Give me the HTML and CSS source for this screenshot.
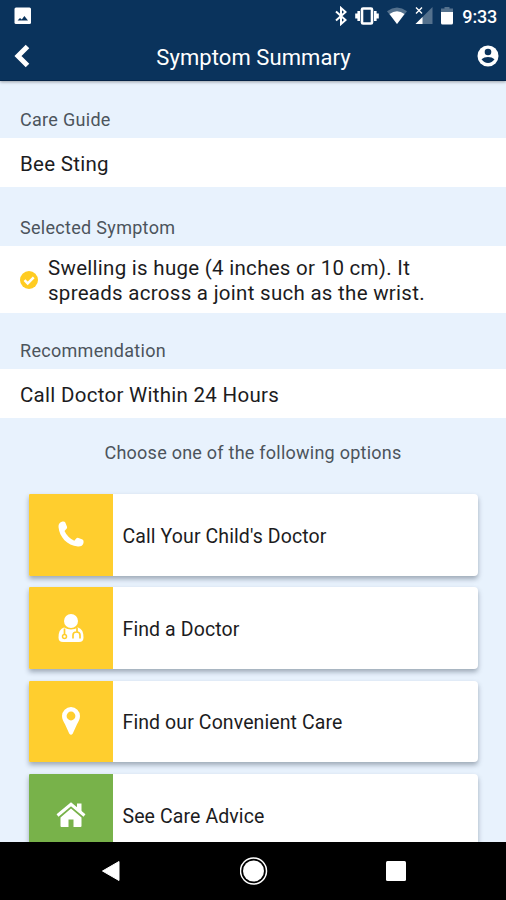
FILE: index.html
```html
<!DOCTYPE html>
<html lang="en">
<head>
    <meta charset="UTF-8">
    <meta name="viewport" content="width=device-width, initial-scale=1.0">
    <title>Symptom Summary</title>
    <link rel="stylesheet" href="styles.css">
</head>
<body>
    <!-- Header -->
    <header class="header">
        <div class="status-bar">
            <svg class="photo" width="18" height="18" viewBox="0 0 18 18">
                <rect x="0.5" y="0.5" width="16.5" height="16.5" rx="1.5" fill="#fff"/>
                <path d="M3.500 13.500l2.500-2.500 1.800 1.500 2.600-3.500 3.600 4.500z" fill="#0a335c"/>
            </svg>
            <div class="status-icons">
                <svg width="14" height="20" viewBox="0 0 14 20">
                    <path d="M2 5.500l9.500 8.500-4.500 4V2l4.500 4L2 14.500" fill="none" stroke="#fff" stroke-width="2"/>
                </svg>
                <svg width="24" height="20" viewBox="0 0 24 20">
                    <rect x="7" y="2.500" width="10" height="15" rx="1" fill="none" stroke="#fff" stroke-width="2.600"/>
                    <path d="M3.700 5v10M20.300 5v10M1.500 7.500v5M22.500 7.500v5" stroke="#fff" stroke-width="2.600"/>
                </svg>
                <svg width="22" height="20" viewBox="0 0 22 20">
                    <path d="M11 18L1 5.200Q11-2 21 5.200z" fill="#54718d"/>
                    <path d="M11 18L3.500 8Q11 2.500 18.500 8z" fill="#fff"/>
                </svg>
                <svg width="18" height="20" viewBox="0 0 18 20">
                    <path d="M0.500 18L17.500 1v17z" fill="#54718d"/>
                    <path d="M0.500 18L7.500 11v7z" fill="#fff"/>
                    <path d="M1 1.500l6 6M7 1.500l-6 6" stroke="#fff" stroke-width="1.400"/>
                </svg>
                <svg width="14" height="20" viewBox="0 0 14 20">
                    <path d="M1 2.500h3.500V1h5v1.500H13V7H1z" fill="#54718d"/>
                    <path d="M1 6h12v11q0 1.500-1.500 1.500h-9Q1 18.500 1 17z" fill="#fff"/>
                </svg>
            </div>
            <span class="clock">9:33</span>
        </div>
        <div class="title-bar">
            <svg class="back" width="18" height="24" viewBox="0 0 18 24">
                <path d="M14.500 2.500L5 12l9.500 9.500" fill="none" stroke="#fff" stroke-width="5"/>
            </svg>
            <h1>Symptom Summary</h1>
            <svg class="account" width="22" height="22" viewBox="0 0 22 22">
                <circle cx="11" cy="11" r="10.500" fill="#fff"/>
                <circle cx="11" cy="7" r="3.300" fill="#0a335c"/>
                <path d="M4.500 14.300Q7 12 11 12t6.500 2.300Q15 18 11 18t-6.500-3.700z" fill="#0a335c"/>
            </svg>
        </div>
    </header>

    <!-- Summary -->
    <main class="content">
        <h2 class="label first">Care Guide</h2>
        <p class="value">Bee Sting</p>
        <h2 class="label">Selected Symptom</h2>
        <div class="value symptom">
            <svg width="18" height="18" viewBox="0 0 18 18">
                <circle cx="9" cy="9" r="9" fill="#fc2"/>
                <path d="M4.500 9.200l3.200 3.200 6-6" fill="none" stroke="#fff" stroke-width="2.500"/>
            </svg>
            <p>Swelling is huge (4 inches or 10 cm). It<br>spreads across a joint such as the wrist.</p>
        </div>
        <h2 class="label third">Recommendation</h2>
        <p class="value">Call Doctor Within 24 Hours</p>

        <p class="choose">Choose one of the following options</p>

        <!-- Options -->
        <div class="options">
            <div class="option">
                <div class="tile">
                    <svg width="28" height="30" viewBox="0 0 28 30">
                        <path d="M5.500 1.500Q1.200 2.600 1.500 7C2.500 17 10 25.500 21 26.500q4.500.2 5.500-3.500.6-2.700-1-3.500l-4-1.500q-1.500-.5-2.500.8l-1.700 2Q10.500 17.500 7.500 11L9.300 9q1.200-1 .7-2.300L8.300 2.500Q7.500 1 5.500 1.500z" fill="#fff"/>
                    </svg>
                </div>
                <span>Call Your Child's Doctor</span>
            </div>
            <div class="option">
                <div class="tile">
                    <svg width="28" height="30" viewBox="0 0 28 30">
                        <circle cx="14" cy="8" r="7" fill="#fff"/>
                        <path d="M7 14.500q7 4 14 0 5.500 1.500 5.500 10Q26.500 29 22 29H6q-4.500 0-4.500-4.500Q1.500 16 7 14.500z" fill="#fff"/>
                        <path d="M7.500 15.500V22M20 15v4M16 25.500V22q0-3 3.500-3t3.500 3v3.500" fill="none" stroke="#ffce2e" stroke-width="1.700"/>
                        <circle cx="7.500" cy="23.500" r="2" fill="#fff" stroke="#ffce2e" stroke-width="1.500"/>
                    </svg>
                </div>
                <span>Find a Doctor</span>
            </div>
            <div class="option">
                <div class="tile">
                    <svg width="20" height="30" viewBox="0 0 20 30">
                        <path d="M10 1a9 9 0 0 1 9 9c0 3-1.500 5.500-3 8.300L11.800 27.500q-1.800 2.500-3.600 0L4 18.300C2.500 15.500 1 13 1 10a9 9 0 0 1 9-9z" fill="#fff"/>
                        <circle cx="10" cy="10" r="4.400" fill="#ffce2e"/>
                    </svg>
                </div>
                <span>Find our Convenient Care</span>
            </div>
            <div class="option care">
                <div class="tile">
                    <svg width="30" height="26" viewBox="0 0 30 26">
                        <path d="M1.500 13.500L15 2.300l13.500 11.200" fill="none" stroke="#fff" stroke-width="3"/>
                        <path d="M21 1.500h4.500v9L21 7zM15 6.500l10.500 9V24q0 1-1 1h-7v-7.500h-5V25h-7q-1 0-1-1v-8.500z" fill="#fff"/>
                    </svg>
                </div>
                <span>See Care Advice</span>
            </div>
        </div>
    </main>

    <!-- Navigation -->
    <nav class="nav">
        <svg width="20" height="22" viewBox="0 0 20 22">
            <path d="M1.500 11L18 1.500v19z" fill="#fff" stroke="#fff" stroke-linejoin="round"/>
        </svg>
        <svg width="28" height="28" viewBox="0 0 28 28">
            <circle cx="13.500" cy="14" r="13" fill="none" stroke="#fff" stroke-width="1.500"/>
            <circle cx="13.500" cy="14" r="10.500" fill="#fff"/>
        </svg>
        <svg width="20" height="20" viewBox="0 0 20 20">
            <rect width="20" height="20" rx="1.500" fill="#fff"/>
        </svg>
    </nav>
</body>
</html>
```
FILE: styles.css
```css
/* General Styles */
* {
    box-sizing: border-box;
}

body {
    margin: 0;
    height: 900px;
    display: flex;
    flex-direction: column;
    overflow: hidden;
    background: #e8f2fd;
    color: #1c1c1e;
    font-family: Roboto, sans-serif;
}

h1, h2, p {
    margin: 0;
    font-weight: 400;
}

svg {
    display: block;
    flex: none;
}

/* Header */
.header {
    position: relative;
    height: 81px;
    flex: none;
    background: #0a335c;
    border-bottom: 1px solid #062447;
    box-shadow: 0 1px 3px rgba(0, 0, 0, 0.35);
    color: #fff;
}

.status-bar {
    height: 32px;
    display: flex;
    align-items: center;
    padding: 0 9px 0 14px;
}

.photo {
    margin-right: auto;
}

.status-icons {
    display: flex;
    gap: 7px;
    margin-right: 8px;
}

.clock {
    font-size: 18px;
    font-weight: 500;
    letter-spacing: -0.2px;
}

.title-bar {
    height: 48px;
    display: grid;
    grid-template-columns: 40px 1fr 40px;
    align-items: center;
    padding: 0 7px 0 8px;
}

.back {
    margin-left: 5px;
}

.title-bar h1 {
    padding-top: 2px;
    font-size: 22px;
    letter-spacing: 0.08px;
    text-align: center;
}

.account {
    justify-self: end;
}

/* Summary */
.content {
    flex: 1;
    min-height: 0;
    overflow: hidden;
    padding-top: 1px;
}

.label {
    display: flex;
    align-items: flex-end;
    height: 59px;
    padding: 0 20px 7px;
    color: #4c545c;
    font-size: 18px;
    line-height: 22px;
    letter-spacing: 0.3px;
}

.first,
.third {
    height: 56px;
}

.value {
    display: flex;
    align-items: center;
    height: 49px;
    padding: 3px 20px 0;
    background: #fff;
    font-size: 20.5px;
    line-height: 25px;
    letter-spacing: 0.28px;
}

.symptom {
    height: 67px;
    padding-top: 1px;
    gap: 10px;
}

.symptom p {
    padding-top: 2px;
}

.choose {
    padding-top: 24px;
    height: 76px;
    color: #4c545c;
    font-size: 18px;
    line-height: 22px;
    letter-spacing: 0.24px;
    text-align: center;
}

/* Options */
.options {
    display: flex;
    flex-direction: column;
    gap: 11.8px;
    padding: 0 28px 0 29px;
}

.option {
    display: flex;
    align-items: center;
    height: 81.5px;
    flex: none;
    background: #fff;
    border-radius: 1px 4px 4px 1px;
    box-shadow: 0 3px 5px rgba(20, 35, 55, 0.35);
    overflow: hidden;
    font-size: 19.5px;
    letter-spacing: 0.1px;
}

.option span {
    padding-top: 3px;
}

.tile {
    display: flex;
    align-items: center;
    justify-content: center;
    width: 83.5px;
    height: 100%;
    margin-right: 10px;
    background: #ffce2e;
}

.care .tile {
    background: #78b24a;
}

/* Navigation */
.nav {
    display: flex;
    align-items: center;
    justify-content: space-between;
    height: 58px;
    flex: none;
    padding: 0 100px 0 101px;
    background: #000;
}
```
